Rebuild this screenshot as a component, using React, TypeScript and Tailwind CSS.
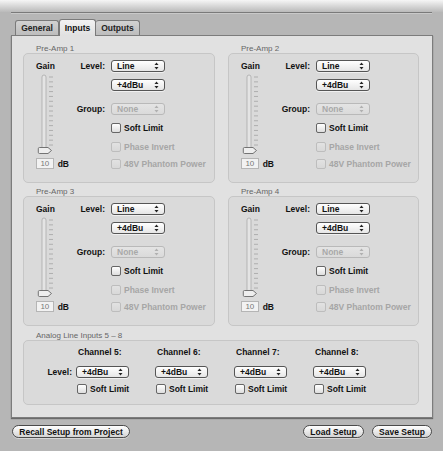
import React from "react";

function Arrows({ disabled }: { disabled?: boolean }) {
  const c = disabled ? "#b0b0b0" : "#222";
  return (
    <svg width="5" height="8" viewBox="0 0 5 8" className="shrink-0">
      <path d="M2.5 0.5 L4.5 3 H0.5 Z" fill={c} />
      <path d="M2.5 7.5 L4.5 5 H0.5 Z" fill={c} />
    </svg>
  );
}

function Popup({ label, disabled, w = "w-[54px]" }: { label: string; disabled?: boolean; w?: string }) {
  return (
    <div
      className={`flex h-[12px] ${w} items-center justify-between rounded-[3px] border bg-linear-to-b pl-[5px] pr-[5px] text-[8.5px] leading-[10px] font-bold ${
        disabled
          ? "border-[#b9b9b9] from-[#e4e4e4] to-[#dadada] text-[#a9a9a9]"
          : "border-[#555] from-white to-[#e6e6e6] text-[#111] shadow-[0_1px_0_#f0f0f0]"
      }`}
    >
      <span>{label}</span>
      <Arrows disabled={disabled} />
    </div>
  );
}

function Check({ label, disabled }: { label: string; disabled?: boolean }) {
  return (
    <div className="flex h-[10px] items-center">
      <div
        className={`h-[10px] w-[10px] rounded-[2px] border bg-linear-to-b ${
          disabled ? "border-[#bdbdbd] from-[#e2e2e2] to-[#d8d8d8]" : "border-[#666] from-white to-[#dedede]"
        }`}
      />
      <span className={`ml-[3px] text-[8.5px] leading-[10px] font-bold ${disabled ? "text-[#a6a6a6]" : "text-[#111]"}`}>
        {label}
      </span>
    </div>
  );
}

function GainSlider() {
  const ticks = Array.from({ length: 15 }, (_, i) => 3 + i * 4.86);
  return (
    <svg width="20" height="80" viewBox="0 0 20 80" className="mt-[2px] -ml-[0px]">
      <rect x="6" y="1" width="4" height="75" rx="2" fill="#e4e4e4" stroke="#a9a9a9" strokeWidth="0.8" />
      {ticks.map((y) => (
        <line key={y} x1="13" x2="17" y1={y} y2={y} stroke="#a3a3a3" strokeWidth="0.8" />
      ))}
      <path
        d="M3.5 73.5 H12 L15.5 76.5 L12 79.5 H3.5 A1.2 1.2 0 0 1 2.3 78.3 V74.7 A1.2 1.2 0 0 1 3.5 73.5 Z"
        fill="#eeeeee"
        stroke="#666"
        strokeWidth="0.9"
      />
    </svg>
  );
}

function PreAmp({ n, first }: { n: number; first?: boolean }) {
  return (
    <div className="flex flex-col">
      <div className={`${first ? "" : "mt-[4px]"} h-[9px] pl-[13px] text-[8px] leading-[9px] text-[#666]`}>
        Pre-Amp {n}
      </div>
      <div className="h-[130px] rounded-[5px] border border-[#c6c6c6] bg-[#dadada]">
        <div className="flex pl-[12px] pt-[6px]">
          <div className="flex w-[33px] flex-col">
            <div className="h-[12px] text-[8.5px] leading-[12px] font-bold text-[#111]">Gain</div>
            <GainSlider />
            <div className="mt-[4px] flex items-center">
              <div className="flex h-[11px] w-[19px] items-center justify-center border border-[#b5b5b5] bg-[#f2f2f2] text-[8px] leading-[9px] text-[#777]">
                10
              </div>
              <span className="ml-[4px] text-[8.5px] leading-[10px] font-bold text-[#111]">dB</span>
            </div>
          </div>
          <div className="flex flex-col">
            <div className="flex h-[12px] items-center">
              <span className="w-[37px] pr-[1px] text-right text-[8.5px] font-bold text-[#111]">Level:</span>
              <div className="ml-[5px]">
                <Popup label="Line" />
              </div>
            </div>
            <div className="mt-[7px] flex h-[12px] items-center">
              <span className="w-[37px]" />
              <div className="ml-[5px]">
                <Popup label="+4dBu" />
              </div>
            </div>
            <div className="mt-[12px] flex h-[12px] items-center">
              <span className="w-[37px] pr-[1px] text-right text-[8.5px] font-bold text-[#111]">Group:</span>
              <div className="ml-[5px]">
                <Popup label="None" disabled />
              </div>
            </div>
            <div className="mt-[8px] ml-[42px]">
              <Check label="Soft Limit" />
            </div>
            <div className="mt-[9px] ml-[42px]">
              <Check label="Phase Invert" disabled />
            </div>
            <div className="mt-[7px] ml-[42px]">
              <Check label="48V Phantom Power" disabled />
            </div>
          </div>
        </div>
      </div>
    </div>
  );
}

function PillButton({ label, w }: { label: string; w: string }) {
  return (
    <div
      className={`flex h-[13px] ${w} items-center justify-center rounded-full border border-[#4a4a4a] bg-linear-to-b from-white to-[#d4d4d4] text-[8.5px] leading-[10px] font-bold text-[#111] shadow-[0_1px_0_#d6d6d6]`}
    >
      {label}
    </div>
  );
}

export default function App() {
  const channels = [5, 6, 7, 8];
  return (
    <div className="flex h-[451px] w-[443px] flex-col bg-[#b6b6b6] font-['Liberation_Sans',Arial,sans-serif]">
      <div className="h-[12px] bg-linear-to-b from-[#f6f6f6] to-[#bababa]" />
      <div className="mx-[11px] h-px bg-[#7a7a7a]" />
      <div className="mx-[11px] h-px bg-[#c9c9c9]" />

      {/* tabs */}
      <div className="mt-[5px] flex h-[16px] items-end pl-[15px]">
        <div className="flex h-[15px] w-[44px] items-center justify-center rounded-t-[3px] border border-b-0 border-[#7a7a7a] bg-linear-to-b from-[#d2d2d2] to-[#bdbdbd] text-[8.5px] font-bold text-[#222]">
          General
        </div>
        <div className="relative z-10 -mb-px flex h-[17px] w-[37px] items-center justify-center rounded-t-[3px] border border-b-0 border-[#7a7a7a] bg-linear-to-b from-[#f2f2f2] to-[#e0e0e0] text-[8.5px] font-bold text-[#111]">
          Inputs
        </div>
        <div className="flex h-[15px] w-[44px] items-center justify-center rounded-t-[3px] border border-b-0 border-l-0 border-[#7a7a7a] bg-linear-to-b from-[#d2d2d2] to-[#bdbdbd] text-[8.5px] font-bold text-[#222]">
          Outputs
        </div>
      </div>

      {/* panel */}
      <div className="mx-[11px] h-[383px] w-[422px] border border-[#7c7c7c] bg-[#e1e1e1] pl-[11px] pt-[8px] shadow-[0_1px_1px_#6a6a6a]">
        <div className="grid grid-cols-[192px_191px] gap-x-[13px]">
          <PreAmp n={1} first />
          <PreAmp n={2} first />
          <PreAmp n={3} />
          <PreAmp n={4} />
        </div>

        <div className="mt-[5px] h-[9px] pl-[13px] text-[8px] leading-[9px] text-[#666]">
          Analog Line Inputs 5 – 8
        </div>
        <div className="h-[65px] w-[396px] rounded-[5px] border border-[#c6c6c6] bg-[#dadada]">
          <div className="grid grid-cols-[52px_79px_79px_79px_79px] pt-[6px]">
            <div />
            {channels.map((c) => (
              <div key={c} className="h-[10px] pl-[2px] text-[8.5px] leading-[10px] font-bold text-[#111]">
                Channel {c}:
              </div>
            ))}
            <div className="mt-[9px] flex h-[12px] items-center justify-end pr-[4px] text-[8.5px] font-bold text-[#111]">
              Level:
            </div>
            {channels.map((c) => (
              <div key={c} className="mt-[9px]">
                <Popup label="+4dBu" w="w-[53px]" />
              </div>
            ))}
            <div />
            {channels.map((c) => (
              <div key={c} className="mt-[6px] pl-[1px]">
                <Check label="Soft Limit" />
              </div>
            ))}
          </div>
        </div>
      </div>

      {/* buttons */}
      <div className="mt-[7px] flex items-center pl-[12px] pr-[11px]">
        <PillButton label="Recall Setup from Project" w="w-[118px]" />
        <div className="flex-1" />
        <PillButton label="Load Setup" w="w-[61px]" />
        <div className="w-[8px]" />
        <PillButton label="Save Setup" w="w-[60px]" />
      </div>
    </div>
  );
}
